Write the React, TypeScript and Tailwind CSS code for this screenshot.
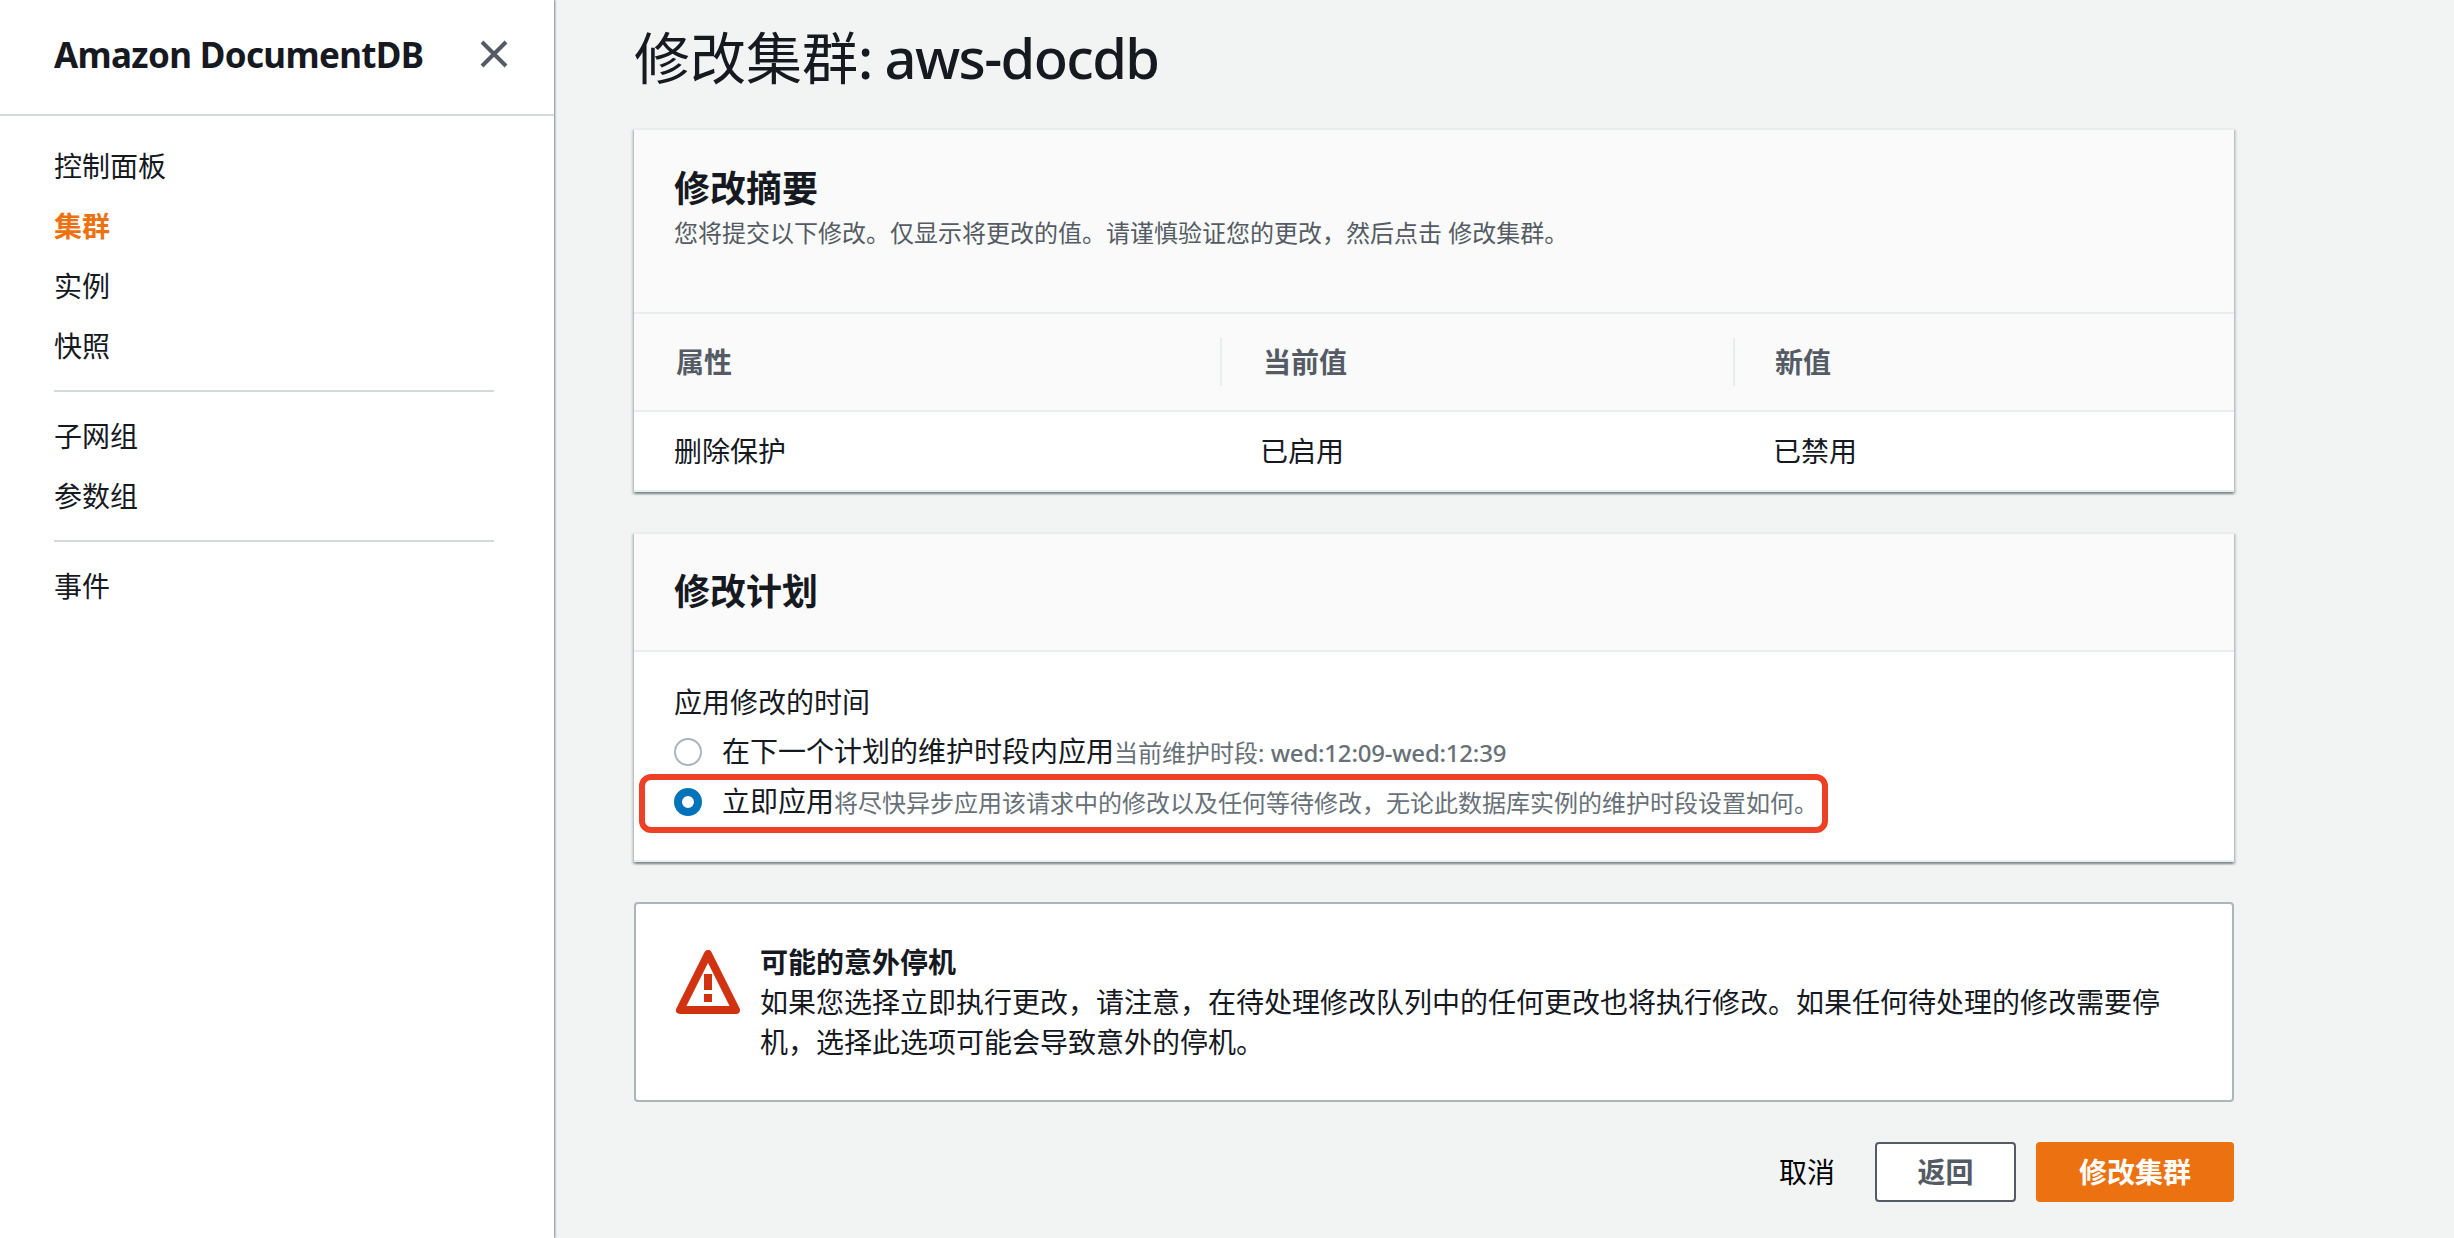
import type { ReactNode } from 'react'

const card =
  'w-[1600px] border-y-2 border-[#eaeded] bg-white shadow-[0_2px_2px_0_rgba(0,28,36,0.3),2px_2px_2px_0_rgba(0,28,36,0.15),-2px_2px_2px_0_rgba(0,28,36,0.15)]'

const navGroups = [
  ['控制面板', '集群', '实例', '快照'],
  ['子网组', '参数组'],
  ['事件'],
]

function Sidebar() {
  return (
    <aside className="z-10 flex w-[554px] shrink-0 flex-col bg-white shadow-[1px_0_2px_0_rgba(0,28,36,0.5)]">
      <header className="flex h-[116px] items-start justify-between border-b-2 border-[#d5dbdb] pt-[30px] pr-[46px] pl-[54px]">
        <h2 className="text-[35px] leading-[50px] font-bold tracking-[-0.65px] whitespace-nowrap">Amazon DocumentDB</h2>
        <svg className="mt-[10px] h-[28px] w-[28px]" viewBox="0 0 28 28" fill="none" stroke="#545b64" strokeWidth="4">
          <path d="M2 2l24 24M26 2L2 26" />
        </svg>
      </header>
      <nav className="flex flex-col pt-[20px] pr-[60px] pl-[54px]">
        {navGroups.map((group, i) => (
          <ul key={i} className={i > 0 ? 'mt-[14px] border-t-2 border-[#d5dbdb] pt-[14px]' : ''}>
            {group.map((item) => (
              <li
                key={item}
                className={
                  item === '集群'
                    ? 'h-[60px] text-[28px] leading-[60px] font-bold text-[#ec7211]'
                    : 'h-[60px] text-[28px] leading-[60px]'
                }
              >
                {item}
              </li>
            ))}
          </ul>
        ))}
      </nav>
    </aside>
  )
}

function Summary() {
  return (
    <section className={card}>
      <div className="h-[184px] border-b-2 border-[#eaeded] bg-[#fafafa] px-[40px] pt-[37px]">
        <h2 className="text-[36px] leading-[44px] font-bold">修改摘要</h2>
        <p className="text-[24px] leading-[44px] text-[#545b64]">
          您将提交以下修改。仅显示将更改的值。请谨慎验证您的更改，然后点击 修改集群。
        </p>
      </div>
      <div className="grid h-[98px] grid-cols-[588px_513px_499px] items-center border-b-2 border-[#eaeded] bg-[#fafafa] text-[28px] leading-[48px] font-bold text-[#545b64]">
        <div className="border-r-2 border-[#eaeded] pl-[42px]">属性</div>
        <div className="border-r-2 border-[#eaeded] pl-[41px]">当前值</div>
        <div className="pl-[40px]">新值</div>
      </div>
      <div className="grid h-[78px] grid-cols-[588px_513px_499px] items-center text-[28px]">
        <div className="pl-[40px]">删除保护</div>
        <div className="pl-[38px]">已启用</div>
        <div className="pl-[38px]">已禁用</div>
      </div>
    </section>
  )
}

function Option({ selected, label, note }: { selected?: boolean; label: string; note: ReactNode }) {
  return (
    <label className="flex h-[50px] items-center whitespace-nowrap">
      <span
        className={
          selected
            ? 'mr-[20px] h-[28px] w-[28px] rounded-full border-[8px] border-[#0073bb] bg-white'
            : 'mr-[20px] h-[28px] w-[28px] rounded-full border-2 border-[#aab7b8] bg-white'
        }
      />
      <span className="text-[28px] leading-[50px]">
        {label}
        <span className="text-[24px] text-[#687078]">{note}</span>
      </span>
    </label>
  )
}

function Schedule() {
  return (
    <section className={`${card} mt-[40px]`}>
      <h2 className="h-[118px] border-b-2 border-[#eaeded] bg-[#fafafa] px-[40px] text-[36px] leading-[116px] font-bold">
        修改计划
      </h2>
      <div className="h-[208px] px-[40px] pt-[25px]">
        <p className="h-[50px] text-[28px] leading-[50px]">应用修改的时间</p>
        <Option
          label="在下一个计划的维护时段内应用"
          note={
            <>
              当前维护时段: <span className="font-medium tracking-[-0.22px]">wed:12:09-wed:12:39</span>
            </>
          }
        />
        <div className="relative">
          <Option
            selected
            label="立即应用"
            note="将尽快异步应用该请求中的修改以及任何等待修改，无论此数据库实例的维护时段设置如何。"
          />
          <div className="absolute -top-[3px] -left-[35px] h-[59px] w-[1189px] rounded-[12px] border-[6px] border-[#ee4026]" />
        </div>
      </div>
    </section>
  )
}

function Warning() {
  return (
    <section className="mt-[40px] flex h-[200px] w-[1600px] rounded-[4px] border-2 border-[#aab7b8] bg-white pt-[38px] pl-[40px]">
      <svg className="mt-[8px] h-[64px] w-[64px] shrink-0" viewBox="0 0 64 64" fill="none" stroke="#d13212">
        <path d="M32 4L4 60h56z" strokeWidth="8" strokeLinejoin="round" />
        <path d="M32 24v16M32 44v8" strokeWidth="8" />
      </svg>
      <div className="ml-[20px] w-[1420px] text-[28px] leading-[40px]">
        <p className="font-bold">可能的意外停机</p>
        <p>
          如果您选择立即执行更改，请注意，在待处理修改队列中的任何更改也将执行修改。如果任何待处理的修改需要停机，选择此选项可能会导致意外的停机。
        </p>
      </div>
    </section>
  )
}

export default function App() {
  return (
    <div
      lang="zh-CN"
      className="flex h-[1238px] w-[2454px] overflow-hidden bg-[#f2f3f3] font-['Noto_Sans','Noto_Sans_CJK_SC',sans-serif] text-[#16191f]"
    >
      <Sidebar />
      <main className="pl-[80px]">
        <h1 className="h-[128px] text-[56px] leading-[115px] whitespace-nowrap">
          修改集群<span className="font-medium tracking-[-1.6px]">: aws-docdb</span>
        </h1>
        <Summary />
        <Schedule />
        <Warning />
        <div className="mt-[40px] flex w-[1600px] items-center justify-end text-[28px]">
          <button className="mr-[40px] h-[60px] text-black">取消</button>
          <button className="mr-[20px] h-[60px] w-[141px] rounded-[4px] border-2 border-[#545b64] bg-white font-bold text-[#545b64]">
            返回
          </button>
          <button className="h-[60px] w-[198px] rounded-[4px] bg-[#ec7211] font-bold text-white">修改集群</button>
        </div>
      </main>
    </div>
  )
}
